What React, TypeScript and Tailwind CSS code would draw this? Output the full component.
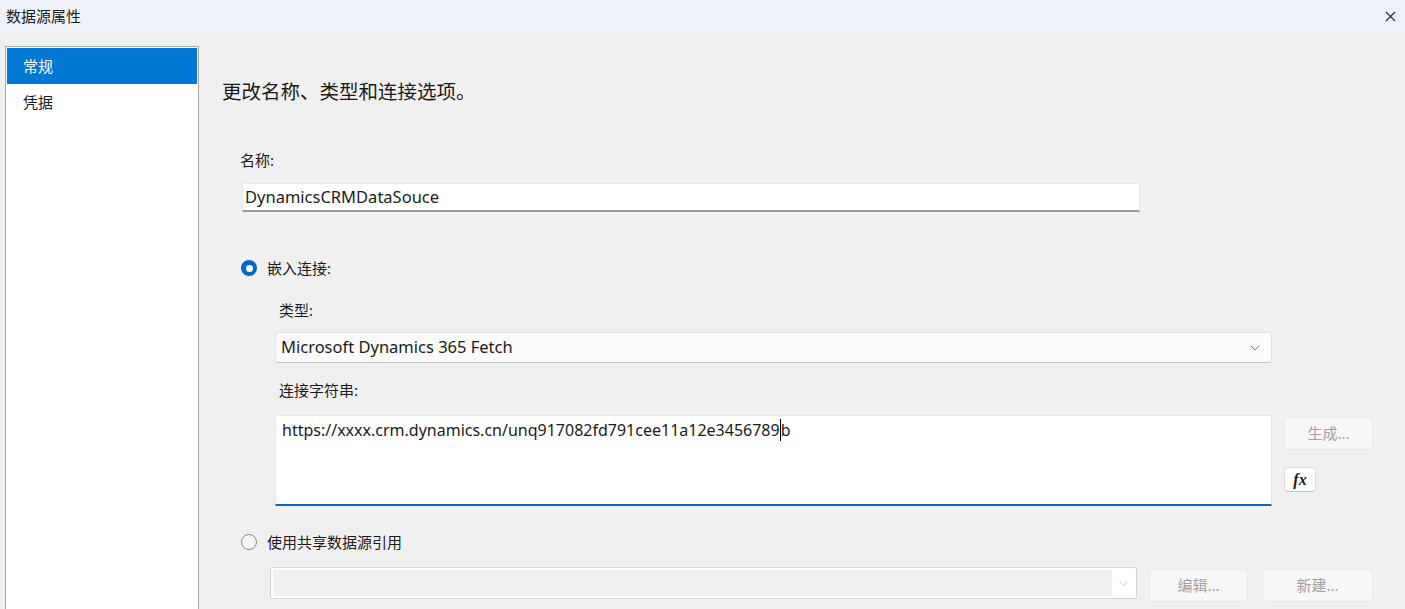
import { ChevronDown, X } from 'lucide-react'

const font = { fontFamily: '"Noto Sans", "Noto Sans CJK SC", sans-serif' }

function Radio({ checked }: { checked: boolean }) {
  return checked ? (
    <span className="w-4 h-4 rounded-full bg-[#0067c0] flex items-center justify-center">
      <span className="w-[7px] h-[7px] rounded-full bg-white" />
    </span>
  ) : (
    <span className="w-4 h-4 rounded-full border border-[#8a8a8a] bg-[#f5f5f5]" />
  )
}

function DisabledButton({ label, className }: { label: string; className: string }) {
  return (
    <button
      disabled
      className={`h-[33px] rounded-[4px] bg-[#f7f7f7] border border-[#e8e8e8] text-[15px] text-[#a0a0a0] ${className}`}
    >
      {label}
    </button>
  )
}

export default function App() {
  return (
    <div
      className="w-full h-[609px] flex flex-col bg-[#f0f0f0] text-[#1b1b1b] overflow-hidden"
      style={font}
    >
      <div className="h-8 shrink-0 flex items-center justify-between bg-[#eef2f8] pl-[6px] pr-[6px]">
        <span className="text-[15px] leading-none">数据源属性</span>
        <X size={17} strokeWidth={1.6} className="text-[#2a2a2a]" />
      </div>

      <div className="flex flex-1 pt-[14px] pl-[5px]">
        <div className="w-[194px] shrink-0 bg-white border border-[#a9a9a9] border-b-0 pt-px px-px">
          <div className="h-9 flex items-center pl-4 bg-[#0078d4] text-white text-[15px]">常规</div>
          <div className="h-9 flex items-center pl-4 text-[15px]">凭据</div>
        </div>

        <div className="flex-1 flex flex-col pl-[23px]">
          <div className="mt-[34px] h-6 flex items-center text-[19.5px]">更改名称、类型和连接选项。</div>

          <div className="mt-[46px] h-5 flex items-center pl-[18px] text-[15px]">名称:</div>
          <div className="mt-[13px] ml-5 w-[898px] h-[29px] bg-white border border-[#e6e6e6] border-b-2 border-b-[#9a9a9a] flex items-center pl-[2px] text-[16.5px]">
            DynamicsCRMDataSouce
          </div>

          <div className="mt-[46px] h-5 flex items-center gap-[10px] pl-[19px] text-[15px]">
            <Radio checked />
            <span>嵌入连接:</span>
          </div>

          <div className="mt-[22px] h-5 flex items-center pl-[57px] text-[15px]">类型:</div>
          <div className="mt-3 ml-[53px] w-[997px] h-[31px] bg-[#fbfbfb] border border-[#e2e2e2] border-b-[#c4c4c4] rounded-[4px] flex items-center justify-between pl-[5px] pr-2 text-[16.5px]">
            <span>Microsoft Dynamics 365 Fetch</span>
            <ChevronDown size={16} strokeWidth={1.3} className="text-[#666]" />
          </div>

          <div className="mt-[17px] h-5 flex items-center pl-[57px] text-[15px]">连接字符串:</div>
          <div className="mt-[15px] flex items-start">
            <div className="ml-[53px] w-[997px] h-[91px] bg-white border border-[#e6e6e6] border-b-2 border-b-[#0067c0] pl-[6px] pt-[2px] text-[16px]">
              https://xxxx.crm.dynamics.cn/unq917082fd791cee11a12e3456789
              <span className="border-l border-black">b</span>
            </div>
            <div className="ml-3 flex flex-col gap-[17px] pt-[2px]">
              <DisabledButton label="生成..." className="w-[89px]" />
              <div className="w-8 h-[25px] bg-white border border-[#dcdcdc] border-b-[#c4c4c4] rounded-[4px] flex items-center justify-center">
                <span
                  className="italic font-bold text-[16px] leading-none"
                  style={{ fontFamily: '"Liberation Serif", serif' }}
                >
                  fx
                </span>
              </div>
            </div>
          </div>

          <div className="mt-[26px] h-5 flex items-center gap-[10px] pl-[19px] text-[15px]">
            <Radio checked={false} />
            <span>使用共享数据源引用</span>
          </div>

          <div className="mt-[15px] flex items-start">
            <div className="ml-12 w-[867px] h-[32px] border border-[#d4d4d4] rounded-[2px] bg-white p-[2px] flex">
              <div className="flex-1 bg-[#f0f0f0]" />
              <div className="w-[22px] flex items-center justify-center">
                <ChevronDown size={15} strokeWidth={1.2} className="text-[#b0b0b0]" />
              </div>
            </div>
            <div className="ml-3 mt-[2px] flex gap-[14px]">
              <DisabledButton label="编辑..." className="w-[99px]" />
              <DisabledButton label="新建..." className="w-[111px]" />
            </div>
          </div>
        </div>
      </div>
    </div>
  )
}
